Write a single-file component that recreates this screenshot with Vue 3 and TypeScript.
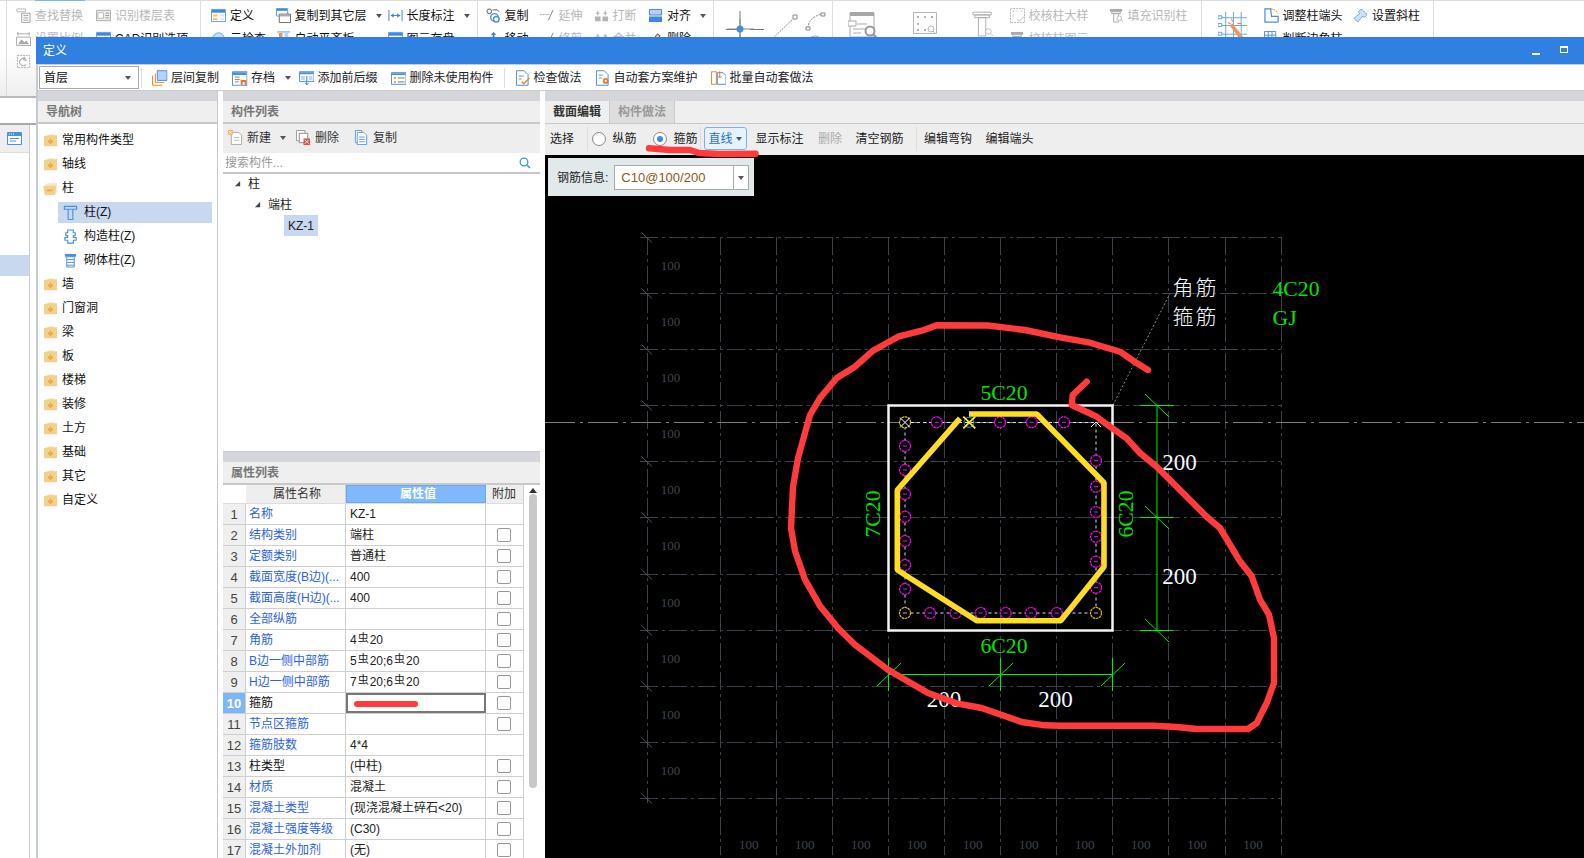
<script setup lang="ts">
interface RibbonItem { icon?: string; label?: string; caret?: boolean; off?: boolean; big?: string }
interface RibbonGroup { cls: string; items: RibbonItem[] }

const groups: RibbonGroup[] = [
  { cls: 'ga', items: [
    { icon: 'i-find', label: '查找替换', off: true },
    { icon: 'i-scale', label: '设置比例', off: true },
    { icon: 'i-rotate', off: true },
    { icon: 'i-floor', label: '识别楼层表', off: true },
    { icon: 'i-def', label: 'CAD识别选项' },
  ] },
  { cls: 'gb', items: [
    { icon: 'i-def', label: '定义' },
    { icon: 'i-check', label: '云检查' },
    { icon: 'i-copyfloor', label: '复制到其它层', caret: true },
    { icon: 'i-level', label: '自动平齐板' },
    { icon: 'i-len', label: '长度标注', caret: true },
    { icon: 'i-def', label: '图元存盘' },
  ] },
  { cls: 'gc', items: [
    { icon: 'i-copy2', label: '复制' },
    { icon: 'i-move', label: '移动' },
    { icon: 'i-extend', label: '延伸', off: true },
    { icon: 'i-extend', label: '修剪', off: true },
    { icon: 'i-break', label: '打断', off: true },
    { icon: 'i-break', label: '合并', off: true },
    { icon: 'i-align', label: '对齐', caret: true },
    { icon: 'i-erase', label: '删除' },
  ] },
  { cls: 'gd', items: [{ big: 'i-draw' }] },
  { cls: 'ge', items: [
    { big: 'i-form' },
    { big: 'i-dots' },
    { big: 'i-tcol' },
    { icon: 'i-verify', label: '校核柱大样', off: true },
    { icon: 'i-tsmall', label: '校核柱图元', off: true },
    { icon: 'i-tsmall', label: '填充识别柱', off: true },
  ] },
  { cls: 'gf', items: [
    { big: 'i-wand' },
    { icon: 'i-adjust', label: '调整柱端头' },
    { icon: 'i-table', label: '判断边角柱' },
    { icon: 'i-slant', label: '设置斜柱' },
  ] },
]

const tools = [
  { icon: 'i-layer', label: '层间复制' },
  { icon: 'i-save', label: '存档', caret: true },
  { icon: 'i-prefix', label: '添加前后缀' },
  { icon: 'i-unused', label: '删除未使用构件', sep: true },
  { icon: 'i-doccheck', label: '检查做法' },
  { icon: 'i-docgear', label: '自动套方案维护' },
  { icon: 'i-batch', label: '批量自动套做法' },
]

interface NavRow { label: string; icon: string; sub?: boolean; active?: boolean }
const nav: NavRow[] = [
  { label: '常用构件类型', icon: 'i-fold' },
  { label: '轴线', icon: 'i-fold' },
  { label: '柱', icon: 'i-open' },
  { label: '柱(Z)', icon: 'i-col', sub: true, active: true },
  { label: '构造柱(Z)', icon: 'i-gz', sub: true },
  { label: '砌体柱(Z)', icon: 'i-qt', sub: true },
  ...['墙', '门窗洞', '梁', '板', '楼梯', '装修', '土方', '基础', '其它', '自定义'].map((label) => ({ label, icon: 'i-fold' })),
]

interface Prop { name: string; parts: string[]; link: boolean; check: boolean }
const p = (name: string, value: string, link = true, check = true): Prop => ({ name, parts: value.split('|'), link, check })
const props: Prop[] = [
  p('名称', 'KZ-1', true, false),
  p('结构类别', '端柱'),
  p('定额类别', '普通柱'),
  p('截面宽度(B边)(...', '400'),
  p('截面高度(H边)(...', '400'),
  p('全部纵筋', ''),
  p('角筋', '4|20'),
  p('B边一侧中部筋', '5|20;6|20'),
  p('H边一侧中部筋', '7|20;6|20'),
  p('箍筋', '', false),
  p('节点区箍筋', ''),
  p('箍筋肢数', '4*4', true, false),
  p('柱类型', '(中柱)', false),
  p('材质', '混凝土'),
  p('混凝土类型', '(现浇混凝土碎石<20)'),
  p('混凝土强度等级', '(C30)'),
  p('混凝土外加剂', '(无)'),
]
const ACTIVE_ROW = 9

const vx = [647.5, 720.5, 776.5, 832.5, 888.5, 944.5, 1000.5, 1056.5, 1112.5, 1168.5, 1225.5, 1281.5]
const hy = [237.5, 293.5, 349.5, 405.5, 461.5, 517.5, 574.5, 630.5, 686.5, 742.5, 798.5]
const leftLabels = [265.7, 321.7, 377.7, 433.7, 489.7, 545.7, 602, 658, 714, 770]
const botLabels = [748.7, 804.7, 860.7, 916.7, 972.7, 1028.7, 1084.7, 1140.7, 1197, 1253]

const bars: [number, number][] = [
  [936.7, 422.3], [1000, 422.3], [1031.7, 422.3], [1064, 422.3],
  [905, 446], [905, 470], [905, 494], [905, 516.7], [905, 541], [905, 565], [905, 589],
  [1096, 460.7], [1096, 486.7], [1096, 512], [1096, 536.7], [1096, 561.7], [1096, 587.7],
  [930, 613], [955.7, 613], [980.7, 613], [1005.7, 613], [1031, 613], [1056.7, 613],
]

const hoop1 = '969,414 1036.7,414 1104,482.7 1104,566.7 1060.7,620.7 976.7,620.7 897.3,570 897.3,490 960,418.3'
const redLoop = '1148,370 1135,362 1120,351.7 1090,342.7 1060,337.3 1025,330 988,325.5 936.7,325.3 921.7,330.7 898,336.7 873,350.7 855,366.7 836.7,378 820,398 810,415 798,458 793,486.7 791,528 795,551 805,579.7 820,606 838,628 855,644.7 888,669.7 928,693 958,703.7 981.7,708 1021.7,722 1045,725.3 1060,725.7 1153,725.7 1176.7,727 1196.7,729 1248,729 1256.7,723 1266.7,703 1274,683 1274,638 1269,614.7 1260,599.7 1251.7,576.3 1240,561.3 1220,528 1206.7,516.7 1173,483 1156.7,466.7 1140,453 1126.7,438.3 1110,426.7 1096.7,416.7 1071.7,405 1072.7,395 1086.7,381.7'
const redTool = '649,148.3 670,150 690,150 699,153 720,154 755.5,153.7'
</script>

<template>
  <div class="app">
    <svg class="sprite" width="0" height="0" aria-hidden="true">
      <defs>
        <symbol id="i-find" viewBox="0 0 16 16"><path d="M1 1h9v3H1z" fill="none" stroke="#b5b5b5"/><path d="M6 5.500h9v10H6z" fill="#f4f4f4" stroke="#a8a8a8"/><path d="M8 8h5M8 10.500h5M8 13h5" stroke="#a8a8a8"/></symbol>
        <symbol id="i-floor" viewBox="0 0 16 16"><path d="M.5 2.500h15v11H.5z" fill="#eee" stroke="#aaa"/><path d="M2 5h6v6H2z" fill="#fff" stroke="#bbb"/><path d="M10 5.500h4M10 8h4M10 10.500h4" stroke="#999"/></symbol>
        <symbol id="i-scale" viewBox="0 0 16 16"><path d="M1 3h14M2 1v4M14 1v4" stroke="#aaa" fill="none"/><path d="M.5 6.500h15v9H.5z" fill="#fff" stroke="#aaa"/><path d="M2 14l4-5 3 3 2-2 3 4z" fill="#aaa"/></symbol>
        <symbol id="i-rotate" viewBox="0 0 16 16"><path d="M1.500 1.500h13v13h-13z" fill="none" stroke="#aaa" stroke-dasharray="2 1"/><path d="M11 6a4 4 0 1 0 0 5M9 3l-1 3 3 1" fill="none" stroke="#999"/></symbol>
        <symbol id="i-def" viewBox="0 0 16 16"><path d="M.5 1.500h15v13H.5z" fill="#fff" stroke="#5a9be0"/><path d="M1 2h14v3H1z" fill="#3f87df"/><path d="M2 7h5v2H2zM2 11h5v2H2z" fill="#f3c26a"/><path d="M9 7h5v2H9zM9 11h5v2H9z" fill="#dbe6f5"/></symbol>
        <symbol id="i-check" viewBox="0 0 16 16"><circle cx="8" cy="8" r="6" fill="#cfe0f6" stroke="#5a9be0"/></symbol>
        <symbol id="i-copyfloor" viewBox="0 0 16 16"><path d="M.5.500h12v8H.5z" fill="#fff" stroke="#5a9be0"/><path d="M1 1h11v2H1z" fill="#3f87df"/><path d="M3.500 6.500h12v9h-12z" fill="#fff" stroke="#666"/><path d="M4 7h11v2H4z" fill="#aaa"/></symbol>
        <symbol id="i-level" viewBox="0 0 16 16"><path d="M1 1h14" stroke="#5a9be0"/><path d="M3 2h4v8H3z" fill="#e9955a"/><path d="M9 2h4v6H9z" fill="#b9d3f2"/></symbol>
        <symbol id="i-len" viewBox="0 0 16 16"><path d="M1 2v12M15 2v12M3 8h10" stroke="#3f7fc8" fill="none"/><path d="M3 8l3-2.500v5zM13 8l-3-2.500v5z" fill="#3f7fc8"/></symbol>
        <symbol id="i-copy2" viewBox="0 0 16 16"><circle cx="3.500" cy="3.500" r="2.500" fill="#fff" stroke="#555"/><circle cx="9" cy="10" r="4" fill="#fff" stroke="#4a8fdc" stroke-width="1.500"/><circle cx="11" cy="12" r="3" fill="#fff" stroke="#4a8fdc" stroke-width="1.500"/><path d="M7 2h5l2 2" stroke="#555" fill="none"/></symbol>
        <symbol id="i-move" viewBox="0 0 16 16"><path d="M8 1l3 3H9v6H7V4H5zM2 12h12v2H2z" fill="#3f7fc8"/></symbol>
        <symbol id="i-extend" viewBox="0 0 16 16"><path d="M0 7h7" stroke="#aaa" stroke-dasharray="2 1"/><path d="M9 13l5-11" stroke="#888"/><path d="M7 7h3" stroke="#bbb"/></symbol>
        <symbol id="i-break" viewBox="0 0 16 16"><path d="M1 9h6v5H1zM9 9h6v5H9z" fill="#b5b5b5"/><path d="M4 3v5M2 5.500h4M12 3v5M10 5.500h4" stroke="#aaa"/></symbol>
        <symbol id="i-align" viewBox="0 0 16 16"><path d="M1.500 1.500h13v6h-13z" fill="#b5d0f0" stroke="#3f7fc8"/><path d="M1 9h14v6H1z" fill="#3f87df"/></symbol>
        <symbol id="i-erase" viewBox="0 0 16 16"><path d="M3 13l7-10 3 2-7 10z" fill="#e6c27a" stroke="#555"/></symbol>
        <symbol id="i-draw" viewBox="0 0 118 40">
          <path d="M26 4v34M12 22.500h14M36 22.500h14" stroke="#777"/><path d="M26 12v20M13 22h27" stroke="#888" fill="none"/><circle cx="26" cy="22" r="3.500" fill="#4a8ae0"/>
          <path d="M57 33l24-23" stroke="#888" stroke-dasharray="2 1" fill="none"/><path d="M53 33h4v4h-4zM79 8h4v4h-4z" fill="#fff" stroke="#888"/>
          <path d="M94 21c0-7 5-12 14-14" stroke="#888" stroke-dasharray="2 1" fill="none"/><path d="M92 20h4v3h-4zM107 6h4v3h-4z" fill="#fff" stroke="#888"/>
          <circle cx="101" cy="37" r="8" fill="none" stroke="#aaa"/><path d="M97 42l7-9" stroke="#aaa"/>
        </symbol>
        <symbol id="i-form" viewBox="0 0 30 30"><path d="M2 1h24v24H2z" fill="#fff" stroke="#aaa"/><path d="M2 0h24v4H2z" fill="#a6a6a6"/><path d="M0 9h8v5H0z" fill="#fff" stroke="#aaa"/><path d="M9 12h10M5 17h12M5 21h8" stroke="#aaa"/><circle cx="22" cy="19" r="4.500" fill="#fff" stroke="#999" stroke-width="2"/><path d="M25 22l4 4" stroke="#999" stroke-width="2"/></symbol>
        <symbol id="i-dots" viewBox="0 0 24 24"><path d="M.5.500h23v21H.5z" fill="none" stroke="#b5b5b5"/><path d="M4 4h2v2H4zM11 4h2v2h-2zM18 4h2v2h-2zM4 11h2v2H4zM4 17h2v2H4zM11 17h2v2h-2z" fill="#b5b5b5"/><circle cx="18" cy="17" r="3" fill="#fff" stroke="#bbb"/><path d="M20 19l3 3" stroke="#bbb"/></symbol>
        <symbol id="i-tcol" viewBox="0 0 24 30"><path d="M1 1h20v3H1zM3 4h16v3H3zM7 7h8v20H7z" fill="#fff" stroke="#aaa"/><circle cx="18" cy="22" r="3" fill="#fff" stroke="#bbb"/><path d="M20 24l3 3" stroke="#bbb"/></symbol>
        <symbol id="i-verify" viewBox="0 0 16 16"><path d="M.5.500h15v15H.5z" fill="none" stroke="#b5b5b5" stroke-dasharray="2 1"/><path d="M3 3h1v1H3zM7 3h1v1H7zM12 3h1v1h-1zM3 8h1v1H3z" fill="#aaa"/><path d="M8 12l2 2 5-5" stroke="#bbb" fill="none"/></symbol>
        <symbol id="i-tsmall" viewBox="0 0 16 16"><path d="M1 1h13v3H1z" fill="#aaa"/><path d="M3 4h9v2H3zM5 6h5v9H5z" fill="#fff" stroke="#aaa"/><circle cx="11" cy="11" r="2.500" fill="#fff" stroke="#bbb"/><path d="M13 13l2 2" stroke="#bbb"/></symbol>
        <symbol id="i-wand" viewBox="0 0 30 30"><path d="M8 1v30M16 1v30M24 1v30M2 7h28M2 15h28M2 24h28" stroke="#6aa3e4" fill="none"/><path d="M0 5h4v3H0zM0 13h4v3H0zM0 22h4v3H0z" fill="#fff" stroke="#5a9be0"/><path d="M12 15l3-2 12 15-3 3z" fill="#e79a5c"/><path d="M10 12l3 1M14 8l1 3M20 13h4" stroke="#e8762a"/></symbol>
        <symbol id="i-adjust" viewBox="0 0 16 16"><path d="M1 1h6l1 8h7v6H1z" fill="#fff" stroke="#4a8fdc" stroke-width="1.300"/><path d="M7 1c4 0 6 2 8 5" stroke="#e8762a" fill="none" stroke-dasharray="2 1"/></symbol>
        <symbol id="i-table" viewBox="0 0 16 16"><path d="M.5.500h12v12H.5zM.5 4.500h12M.5 8.500h12M4.500.5v12M8.500.5v12" fill="#fff" stroke="#4a8fdc"/></symbol>
        <symbol id="i-slant" viewBox="0 0 16 16"><path d="M1 11l4 4 5-6 2 1 3-3-6-6-3 3 1 2z" fill="#cfe0f6" stroke="#4a8fdc" stroke-dasharray="2 .6"/></symbol>
        <symbol id="i-layer" viewBox="0 0 16 16"><path d="M.5 5.500v10h10M3.500 3.500v9h9" fill="none" stroke="#e8862a"/><path d="M5.500.5h10v10h-10z" fill="#b7d3f4" stroke="#4a8fdc"/></symbol>
        <symbol id="i-save" viewBox="0 0 16 16"><path d="M.5 1.500h15v14H.5z" fill="#fff" stroke="#4a8fdc"/><path d="M1 2h14v3H1z" fill="#4a8fdc"/><path d="M3 7h5M3 9.500h5M3 12h4" stroke="#888"/><path d="M9 10h6v5H9z" fill="#e8762a"/><path d="M11 12h2v3h-2z" fill="#fff"/></symbol>
        <symbol id="i-prefix" viewBox="0 0 16 16"><path d="M.5 1.500h15v10H.5z" fill="#fff" stroke="#4a8fdc"/><path d="M1 2h14v2H1z" fill="#4a8fdc"/><path d="M2 6h4v4H2zM10 6h4v4h-4z" fill="#bfd6f3"/><path d="M8 6v9M6 13l2 2 2-2" stroke="#3f7fc8" fill="none"/></symbol>
        <symbol id="i-unused" viewBox="0 0 16 16"><path d="M.5 2.500h15v12H.5z" fill="#fff" stroke="#4a8fdc"/><path d="M1 3h14v2H1z" fill="#4a8fdc"/><path d="M3 7h2v2H3zM3 11h2v2H3z" fill="#e8962a"/><path d="M7 8h7M7 12h7" stroke="#777"/></symbol>
        <symbol id="i-doccheck" viewBox="0 0 16 16"><path d="M1.500.5h8l4 4v11h-12z" fill="#fff" stroke="#4a8fdc"/><path d="M4 6h5M4 9h3" stroke="#888"/><path d="M7 12l2 2 6-6" stroke="#e8862a" fill="none" stroke-width="1.500"/></symbol>
        <symbol id="i-docgear" viewBox="0 0 16 16"><path d="M1.500.5h8l4 4v11h-12z" fill="#fff" stroke="#4a8fdc"/><path d="M4 5h4M4 8h3" stroke="#888"/><circle cx="11" cy="11" r="3" fill="#e8762a"/><circle cx="11" cy="11" r="1.200" fill="#fff"/></symbol>
        <symbol id="i-batch" viewBox="0 0 16 16"><path d="M.5 1.500h5v13h-5z" fill="#fff" stroke="#e8862a"/><path d="M6.500 2.500h6l3 3v9h-9z" fill="#fff" stroke="#4a8fdc"/><path d="M9 1v7M7 6l2 2 2-2" stroke="#e8762a" fill="none"/></symbol>
        <symbol id="i-new" viewBox="0 0 16 16"><path d="M3.500 2.500h8l3 3v10h-11z" fill="#fff" stroke="#aaa"/><path d="M0 0h5v5H0z" fill="#f1b04f"/><path d="M1 1l3 3M4 1L1 4" stroke="#fff"/><path d="M6 8h6M6 11h6" stroke="#bbb"/></symbol>
        <symbol id="i-del" viewBox="0 0 16 16"><path d="M.5.5h9v11h-9z" fill="#fff" stroke="#999"/><path d="M3.500 3.500h9v10h-9z" fill="#fff" stroke="#888"/><path d="M8 9h7v7H8z" fill="#d9534f"/><path d="M9.500 10.500l4 4M13.500 10.500l-4 4" stroke="#fff"/></symbol>
        <symbol id="i-doc" viewBox="0 0 16 16"><path d="M1.500.5h7v13h-7z" fill="#fff" stroke="#5a9be0"/><path d="M3.500 2.500h7l3 3v10h-10z" fill="#fff" stroke="#5a9be0"/><path d="M5.500 7.500h6M5.500 10h6M5.500 12.500h6" stroke="#5a9be0"/></symbol>
        <symbol id="i-search" viewBox="0 0 12 12"><circle cx="5" cy="5" r="3.800" fill="none" stroke="#3d96d6" stroke-width="1.300"/><path d="M8 8l3 3" stroke="#3d96d6" stroke-width="1.500"/></symbol>
        <symbol id="i-fold" viewBox="0 0 16 16"><path d="M6 1.500h6v2H6z" fill="#f5e3bd"/><path d="M1 3.500l4-1h10v11.500H1z" fill="#f2d08e"/><path d="M7 6h2v2h2v2H9v2H7v-2H5V8h2z" fill="#e9ab4e"/></symbol>
        <symbol id="i-open" viewBox="0 0 16 16"><path d="M3 3l5-1h7v11H3z" fill="#f8e8c6"/><path d="M0 5h14l-1 10H2z" fill="#f2d08e"/><path d="M4 9h6v2H4z" fill="#e9ab4e"/></symbol>
        <symbol id="i-col" viewBox="0 0 16 16"><path d="M1.500 1.500h13v3h-13zM3.500 4.500h9M5.500 4.500h5v11h-5z" fill="none" stroke="#4a8fdc" stroke-width="1.200"/></symbol>
        <symbol id="i-gz" viewBox="0 0 16 16"><path d="M5 1h6v3h2v3h-2v2h3v3h-3v3H5v-3H2V9h3V7H3V4h2z" fill="#fff" stroke="#4a8fdc" stroke-width="1.200"/></symbol>
        <symbol id="i-qt" viewBox="0 0 16 16"><path d="M2 1h12v3H2z" fill="#4a8fdc"/><path d="M4 4h8v11H4z" fill="#fff" stroke="#4a8fdc"/><path d="M4 7h8M4 10h8M4 13h8" stroke="#4a8fdc"/></symbol>
        <symbol id="i-tri" viewBox="0 0 8 8"><path d="M7 1v6H1z" fill="#444"/></symbol>
        <symbol id="i-side" viewBox="0 0 15 13"><path d="M.5.5h14v12H.5z" fill="#fff" stroke="#4a8fdc"/><path d="M1 1h13v3H1z" fill="#4a8fdc"/><path d="M2 1.500h1v1H2zM4 1.500h1v1H4zM6 1.500h1v1H6z" fill="#fff"/><path d="M3 6.500h9M3 9h6" stroke="#4a8fdc"/></symbol>
      </defs>
    </svg>

    <header class="ribbon">
      <section v-for="g in groups" :key="g.cls" class="group" :class="g.cls">
        <template v-for="(it, i) in g.items" :key="i">
          <svg v-if="it.big" class="big" :class="it.big"><use :href="'#' + it.big" /></svg>
          <div v-else class="rb-item" :class="{ off: it.off }">
            <svg class="ic"><use :href="'#' + it.icon" /></svg>
            <span v-if="it.label">{{ it.label }}</span>
            <i v-if="it.caret" class="caret" />
          </div>
        </template>
      </section>
    </header>

    <aside class="side">
      <div class="side-gap" />
      <div class="side-tool"><svg class="side-ic"><use href="#i-side" /></svg></div>
      <div class="side-list"><div class="side-sel" /></div>
    </aside>

    <main class="window">
      <div class="titlebar">
        <span>定义</span>
        <div class="win-btns"><i class="w-min" /><i class="w-max" /></div>
      </div>

      <div class="wtool">
        <div class="combo"><span>首层</span><i class="caret" /></div>
        <i class="vsep first" />
        <template v-for="t in tools" :key="t.label">
          <div class="tbtn">
            <svg class="ic16"><use :href="'#' + t.icon" /></svg>
            <span>{{ t.label }}</span>
            <i v-if="t.caret" class="caret" />
          </div>
          <i v-if="t.sep" class="vsep mid" />
        </template>
      </div>

      <div class="body">
        <section class="col nav">
          <div class="strip" />
          <h3 class="head">导航树</h3>
          <ul class="navlist">
            <li v-for="n in nav" :key="n.label" class="navrow" :class="{ sub: n.sub, active: n.active }">
              <svg class="ic"><use :href="'#' + n.icon" /></svg>
              <span>{{ n.label }}</span>
            </li>
          </ul>
        </section>

        <section class="col mid">
          <div class="comp">
            <div class="strip" />
            <h3 class="head">构件列表</h3>
            <div class="ctool">
              <div class="cbtn"><svg class="ic"><use href="#i-new" /></svg><span>新建</span><i class="caret" /></div>
              <div class="cbtn"><svg class="ic"><use href="#i-del" /></svg><span>删除</span></div>
              <div class="cbtn"><svg class="ic"><use href="#i-doc" /></svg><span>复制</span></div>
            </div>
            <div class="search"><span>搜索构件...</span><svg class="mag"><use href="#i-search" /></svg></div>
            <div class="tree">
              <div class="tnode l0"><svg class="tri"><use href="#i-tri" /></svg><span>柱</span></div>
              <div class="tnode l1"><svg class="tri"><use href="#i-tri" /></svg><span>端柱</span></div>
              <div class="tnode l2"><span class="picked">KZ-1</span></div>
            </div>
          </div>
          <div class="prop">
            <div class="strip" />
            <h3 class="head">属性列表</h3>
            <div class="prop-body">
              <div class="ptable">
                <div class="prow phead">
                  <div class="c-n blank" /><div class="c-name">属性名称</div><div class="c-val sel">属性值</div><div class="c-add">附加</div>
                </div>
                <div v-for="(r, i) in props" :key="r.name" class="prow">
                  <div class="c-n" :class="{ cur: i === ACTIVE_ROW }">{{ i + 1 }}</div>
                  <div class="c-name" :class="{ link: r.link }">{{ r.name }}</div>
                  <div class="c-val" :class="{ edit: i === ACTIVE_ROW }">
                    <template v-for="(part, k) in r.parts" :key="k"><b v-if="k > 0" class="bar">虫</b>{{ part }}</template>
                  </div>
                  <div class="c-add"><i v-if="r.check" class="cb" /></div>
                </div>
              </div>
              <div class="scroll"><i class="up" /><i class="thumb" /></div>
            </div>
          </div>
        </section>

        <section class="col right">
          <div class="strip" />
          <div class="tabs">
            <div class="tab on">截面编辑</div>
            <div class="tab">构件做法</div>
          </div>
          <div class="stool">
            <span>选择</span>
            <i class="vsep s1" />
            <label class="radio r1"><i class="dot" /><span>纵筋</span></label>
            <label class="radio r2"><i class="dot on" /><span>箍筋</span></label>
            <i class="vsep s2" />
            <div class="ddbtn"><span>直线</span><i class="caret" /></div>
            <span class="m9">显示标注</span>
            <span class="m14 off">删除</span>
            <span class="m13">清空钢筋</span>
            <i class="vsep s3" />
            <span class="m7">编辑弯钩</span>
            <span class="m13">编辑端头</span>
          </div>
          <div class="canvas">
            <svg class="cad" viewBox="545 155 1039 703" width="1039" height="703">
              <g class="grid">
                <line v-for="y in hy" :key="'h' + y" x1="640" :y1="y" x2="1281" :y2="y" />
                <line x1="647.500" y1="237" x2="647.500" y2="803" />
                <line v-for="x in vx.slice(1)" :key="'v' + x" :x1="x" y1="237" :x2="x" y2="855" />
              </g>
              <g class="slash">
                <line v-for="y in hy" :key="'s' + y" x1="641.500" :y1="y - 5" x2="652" :y2="y + 5" />
              </g>
              <g class="lab100">
                <text v-for="y in leftLabels" :key="'l' + y" x="670.500" :y="y + 4.500">100</text>
                <text v-for="x in botLabels" :key="'b' + x" :x="x" y="848.500">100</text>
              </g>
              <line class="center" x1="545" y1="422.500" x2="1584" y2="422.500" />
              <line class="leader" x1="1113" y1="405" x2="1170" y2="293.500" />

              <path class="tie" d="M905 422.500H1096V613H905Z" />
              <rect class="outer" x="888.500" y="405.500" width="224" height="225" />

              <g v-for="[x, y] in bars" :key="x + '-' + y">
                <circle class="bar-c" :cx="x" :cy="y" r="5.500" />
                <line class="bar-m" :x1="x - 2" :y1="y" :x2="x + 2" :y2="y" />
              </g>
              <circle class="bar-y" cx="905" cy="613" r="5.500" />
              <circle class="bar-y" cx="1096" cy="613" r="5.500" />
              <line class="bar-g" x1="903" y1="613" x2="907" y2="613" />
              <line class="bar-g" x1="1094" y1="613" x2="1098" y2="613" />
              <circle class="bar-y" cx="905" cy="422.300" r="5.500" />
              <path class="x-w" d="M900 417.500l10 10M910 417.500l-10 10M1091 427l5-5 5 5" />

              <polyline class="hoop" :points="hoop1" />
              <circle class="x-b" cx="969" cy="422.300" r="5" />
              <path class="x-y" d="M963.300 416.700l12 11.600M975.300 416.700l-12 11.600" />

              <g class="dim">
                <line x1="1157" y1="405.500" x2="1157" y2="630.500" />
                <line x1="1140" y1="405.500" x2="1173.500" y2="405.500" />
                <line x1="1140" y1="517.500" x2="1173.500" y2="517.500" />
                <line x1="1140" y1="630.500" x2="1173.500" y2="630.500" />
                <line x1="888.500" y1="674.500" x2="1112.500" y2="674.500" />
                <line x1="888.500" y1="658" x2="888.500" y2="691" />
                <line x1="1000.500" y1="658" x2="1000.500" y2="691" />
                <line x1="1112.500" y1="658" x2="1112.500" y2="691" />
                <line x1="1145" y1="394" x2="1169" y2="417" />
                <line x1="1145" y1="506" x2="1169" y2="529" />
                <line x1="1145" y1="619" x2="1169" y2="642" />
                <line x1="877" y1="686" x2="901" y2="663" />
                <line x1="989" y1="686" x2="1013" y2="663" />
                <line x1="1101" y1="686" x2="1125" y2="663" />
              </g>

              <text class="t-g" x="1004" y="400">5C20</text>
              <text class="t-g" x="1004" y="653">6C20</text>
              <text class="t-g" transform="translate(880 514) rotate(-90)">7C20</text>
              <text class="t-g" transform="translate(1133 514) rotate(-90)">6C20</text>
              <text class="t-w" x="1179.500" y="470">200</text>
              <text class="t-w" x="1179.500" y="583.500">200</text>
              <text class="t-w" x="944" y="707">200</text>
              <text class="t-w" x="1055.500" y="707">200</text>
              <text class="t-cn" x="1172.500" y="295">角筋</text>
              <text class="t-cn" x="1172.500" y="324">箍筋</text>
              <text class="t-gl" x="1272.500" y="295.500">4C20</text>
              <text class="t-gl" x="1272.500" y="324.500">GJ</text>
            </svg>
            <div class="info">
              <span>钢筋信息:</span>
              <div class="info-combo"><span>C10@100/200</span><i class="info-arrow"><i class="caret" /></i></div>
            </div>
          </div>
        </section>
      </div>
    </main>

    <svg class="ink" viewBox="0 0 1584 858" width="1584" height="858" aria-hidden="true">
      <polyline :points="redLoop" />
      <polyline :points="redTool" />
      <line class="thick" x1="357" y1="704" x2="415" y2="704" />
    </svg>
  </div>
</template>

<style>
html, body { margin: 0; padding: 0; background: #fff; overflow: hidden; }
</style>

<style scoped>
.app {
  position: relative;
  width: 1584px;
  height: 858px;
  overflow: hidden;
  background: #fff;
  color: #222;
  font: 12px/16px "Liberation Sans", "Noto Sans CJK SC", sans-serif;
}
.sprite { position: absolute; }
.caret {
  display: inline-block;
  width: 0;
  height: 0;
  border: 3px solid transparent;
  border-top: 4px solid #555;
  border-bottom: 0;
}

/* ribbon */
.ribbon {
  position: relative;
  display: flex;
  padding-left: 6px;
  border-top: 1px solid #ddd;
  border-bottom: 2px solid #bbb;
  box-sizing: content-box;
  height: 95px;
  background: linear-gradient(#fff 55%, #eee);
}
.ribbon::before {
  content: "";
  position: absolute;
  left: 35px;
  top: -1px;
  width: 50px;
  height: 1px;
  background: #7db3ee;
}
.group {
  display: grid;
  grid-auto-flow: column;
  grid-template-rows: repeat(2, 23px);
  align-content: start;
  padding-top: 3px;
  border-right: 1px solid #ddd;
  height: 92px;
}
.ga { border-left: 1px solid #ddd; padding-left: 9px; grid-template-rows: repeat(3, 23px); grid-template-columns: 80px 104px; }
.gb { padding-left: 10px; grid-template-columns: 64.5px 112px 89.5px; }
.gc { padding-left: 7.5px; grid-template-columns: 54px 54px 54.5px 64.5px; }
.gd { width: 118px; }
.ge { padding-left: 15px; grid-template-columns: 65px 59px 38px 99px 92px; }
.gf { padding-left: 16px; grid-template-columns: 46px 89.5px 79.5px; }
.rb-item {
  display: flex;
  align-items: center;
  gap: 4px;
  white-space: nowrap;
  color: #111;
}
.rb-item.off { color: #b8b8b8; }
.rb-item .caret { margin-left: 5px; }
.ic { width: 15px; height: 15px; flex: none; }
.big { grid-row: span 2; overflow: visible; }
.i-draw { width: 118px; height: 40px; margin-top: 3px; }
.i-form { width: 30px; height: 30px; margin-top: 8px; }
.i-dots { width: 24px; height: 24px; margin-top: 8px; }
.i-tcol { width: 22px; height: 28px; margin-top: 7px; }
.i-wand { width: 29px; height: 29px; margin-top: 7px; }

/* left sliver */
.side { width: 36px; display: flex; flex-direction: column; height: 760px; }
.side-gap { height: 25px; border-bottom: 2px solid #aaa; box-sizing: content-box; }
.side-tool {
  width: 30px;
  height: 28px;
  padding: 7px 0 0 7px;
  box-sizing: border-box;
  background: #eee;
  border-right: 1px solid #ccc;
  border-bottom: 1px solid #ddd;
}
.side-ic { display: block; width: 15px; height: 13px; }
.side-list {
  flex: 1;
  width: 30px;
  box-sizing: border-box;
  padding-top: 102px;
  border-right: 1px solid #ccc;
}
.side-sel { height: 21px; background: #c8d8ef; }

/* window */
.window {
  position: absolute;
  left: 36px;
  top: 37px;
  right: 0;
  bottom: 0;
  display: flex;
  flex-direction: column;
  background: #fff;
  border-left: 2px solid #c5cbd3;
}
.titlebar {
  display: flex;
  align-items: center;
  justify-content: space-between;
  flex: none;
  height: 27px;
  padding: 0 16px 0 7px;
  background: #2f80e0;
  color: #fff;
  margin-left: -2px;
}
.win-btns { display: flex; align-items: flex-start; gap: 20px; }
.w-min { width: 8px; height: 2px; background: #fff; margin-top: 6px; }
.w-max { width: 8px; height: 7px; border: 1px solid #fff; border-top-width: 2px; box-sizing: border-box; margin-top: -1px; }
.wtool {
  display: flex;
  align-items: center;
  flex: none;
  padding-left: 1px;
  border-top: 1px solid #ccc;
  border-bottom: 1px solid #ccc;
  box-sizing: content-box;
  height: 25px;
}
.combo {
  display: flex;
  align-items: center;
  justify-content: space-between;
  width: 100px;
  height: 23px;
  box-sizing: border-box;
  padding: 0 7px 0 4px;
  border: 1px solid #aaa;
  font-size: 12px;
  color: #111;
}
.vsep { display: block; width: 1px; height: 20px; background: #ddd; flex: none; }
.vsep.first { margin: 0 10px 0 2px; }
.vsep.mid { margin: 0 10px 0 -3px; }
.tbtn { display: flex; align-items: center; gap: 3.5px; margin-right: 13px; white-space: nowrap; color: #222; }
.tbtn .caret { margin-left: 6px; margin-right: -5px; }
.ic16 { width: 15.500px; height: 16px; flex: none; }

.body {
  flex: 1;
  min-height: 0;
  display: grid;
  grid-template-columns: 180px 317px 1fr;
  column-gap: 5px;
}
.col { min-width: 0; min-height: 0; display: flex; flex-direction: column; }
.strip { height: 10px; background: #d5d6db; flex: none; }
.head {
  margin: 0;
  height: 23px;
  flex: none;
  box-sizing: border-box;
  padding-left: 8px;
  line-height: 22px;
  font-size: 12px;
  font-weight: 700;
  color: #777;
  background: #efefef;
  border-bottom: 2px solid #c8c8c8;
}

/* nav */
.nav { border-right: 1px solid #c5cbd3; }
.navlist { list-style: none; margin: 4px 0 0; padding: 0 5px 0 5px; }
.navrow { display: flex; align-items: center; gap: 4px; height: 24px; color: #111; }
.navrow.sub { margin-left: 15px; padding-left: 5px; height: 24px; gap: 6px; }
.navrow.active { background: linear-gradient(#c8d8ef, #c8d8ef) 0 50% / 100% 21px no-repeat; }

/* component list */
.mid { overflow: hidden; }
.comp { height: 361px; flex: none; display: flex; flex-direction: column; border-bottom: 1px solid #ccc; box-sizing: border-box; }
.ctool { display: flex; align-items: center; height: 29px; flex: none; background: #eee; padding: 0 0 2px 5px; box-sizing: border-box; }
.cbtn { display: flex; align-items: center; gap: 4px; margin-right: 15px; color: #333; }
.cbtn:first-child { margin-right: 10px; }
.cbtn .caret { margin-left: 5px; }
.search {
  display: flex;
  align-items: center;
  justify-content: space-between;
  height: 19px;
  flex: none;
  box-sizing: content-box;
  padding: 0 9px 0 2px;
  border-bottom: 2px solid #c8c8c8;
  color: #999;
}
.mag { width: 12px; height: 12px; }
.tree { margin-top: -1px; }
.tnode { display: flex; align-items: center; height: 21px; color: #222; }
.tri { width: 7px; height: 7px; margin-right: 7px; }
.l0 { padding-left: 11px; }
.l1 { padding-left: 31px; }
.l2 { padding-left: 61px; }
.picked { display: flex; align-items: center; height: 21px; padding: 0 4px; background: #c8d8ef; }

/* properties */
.prop { flex: 1; min-height: 0; display: flex; flex-direction: column; }
.prop-body { display: flex; flex: 1; min-height: 0; overflow: hidden; }
.ptable { width: 301px; flex: none; }
.prow {
  display: grid;
  grid-template-columns: 23px 100px 140px 38px;
  height: 21px;
  box-sizing: border-box;
  border-bottom: 1px solid #cfcfcf;
  line-height: 21px;
}
.prow > div { box-sizing: border-box; border-right: 1px solid #cfcfcf; overflow: hidden; white-space: nowrap; }
.phead { height: 19px; line-height: 19px; border-bottom: 1px solid #ddd; }
.phead > div { background: #eee; text-align: center; color: #333; }
.phead .blank { background: #fff; border-right: 0; }
.phead .sel { background: #7fb9fb; color: #fff; font-weight: 700; border: 1px solid #6fa8ea; line-height: 16px; }
.c-n { background: #efefef; text-align: center; color: #444; font-size: 13px; }
.c-n.cur { background: #7cb8f8; color: #fff; font-weight: 700; }
.c-name { padding-left: 3px; color: #111; }
.c-name.link { color: #2b62e6; }
.c-val { padding-left: 4px; color: #222; }
.c-val.edit { border: 2px solid #777 !important; }
.c-add { display: flex; align-items: center; justify-content: center; padding-right: 1px; }
.cb { display: block; width: 14px; height: 14px; box-sizing: border-box; border: 1px solid #999; border-radius: 2px; background: #fff; }
.bar { font-size: 11px; font-weight: 400; vertical-align: 2px; line-height: 0; margin: 0 1px; }
.scroll { flex: 1; position: relative; }
.up {
  position: absolute;
  left: 5px;
  top: 3px;
  width: 0;
  height: 0;
  border: 4px solid transparent;
  border-bottom: 5px solid #333;
  border-top: 0;
}
.thumb {
  position: absolute;
  left: 5px;
  top: 9px;
  width: 8px;
  height: 294px;
  border-radius: 4px;
  background: #c8c8c8;
}

/* section editor */
.tabs {
  display: flex;
  height: 23px;
  flex: none;
  background: #efefef;
  border-bottom: 1px solid #c8c8c8;
  box-sizing: border-box;
}
.tab {
  width: 65px;
  line-height: 22px;
  text-align: center;
  font-weight: 700;
  color: #999;
  background: #dedede;
  border-right: 1px solid #ccc;
  box-sizing: border-box;
}
.tab.on { color: #333; background: #efefef; }
.stool {
  display: flex;
  align-items: center;
  height: 31px;
  flex: none;
  padding: 0 0 2px 5px;
  box-sizing: border-box;
  background: #eee;
  color: #222;
  white-space: nowrap;
}
.vsep.s1 { height: 24px; margin-left: 12.500px; }
.vsep.s2 { height: 24px; margin-left: 2.500px; }
.vsep.s3 { height: 24px; margin-left: 12.500px; }
.radio { display: flex; align-items: center; gap: 7px; }
.r1 { margin-left: 4px; }
.r2 { margin-left: 16px; }
.dot {
  position: relative;
  display: block;
  width: 14px;
  height: 14px;
  box-sizing: border-box;
  border: 1px solid #888;
  border-radius: 50%;
  background: #fff;
}
.dot.on::after {
  content: "";
  position: absolute;
  left: 3px;
  top: 3px;
  width: 6px;
  height: 6px;
  border-radius: 50%;
  background: #3b8ae8;
}
.ddbtn {
  display: flex;
  align-items: center;
  justify-content: space-between;
  width: 43px;
  height: 23px;
  box-sizing: border-box;
  margin-left: 2.500px;
  padding: 0 4px;
  border: 1px solid #7ab0f0;
  border-radius: 3px;
  background: #e8f2fd;
  color: #2a6fd0;
}
.m9 { margin-left: 9px; }
.m14 { margin-left: 14.500px; }
.m13 { margin-left: 13.500px; }
.m7 { margin-left: 7px; }
.off { color: #aaa; }
.canvas { position: relative; flex: 1; min-height: 0; background: #000; overflow: hidden; }
.cad { display: block; }
.grid line { stroke: #3a404c; stroke-width: 1; stroke-dasharray: 18 4 3 4; }
.slash line { stroke: #555; stroke-width: 1; }
.lab100 text { fill: #3f4552; font: 13px "Liberation Serif", serif; text-anchor: middle; }
.center { stroke: #7c7c7c; stroke-width: 1; stroke-dasharray: 30 5 3 5; }
.leader { stroke: #888; stroke-width: 1; stroke-dasharray: 2 2; }
.tie { fill: none; stroke: #cfe6ff; stroke-width: 1; stroke-dasharray: 3 3; }
.outer { fill: none; stroke: #f4f4f4; stroke-width: 2.500; }
.bar-c { fill: #000; stroke: #ff00ff; stroke-width: 1.200; stroke-dasharray: 2.500 .6; }
.bar-m { stroke: #d020ff; stroke-width: 1; }
.bar-y { fill: #000; stroke: #e8c020; stroke-width: 1.200; stroke-dasharray: 2.500 .6; }
.bar-g { stroke: #aaa; stroke-width: 1; }
.x-w { fill: none; stroke: #fff; stroke-width: 1; }
.hoop { fill: none; stroke: #ffdd22; stroke-width: 5.600; stroke-linejoin: bevel; }
.x-b { fill: none; stroke: #2a90ff; stroke-width: 1; }
.x-y { fill: none; stroke: #ffee22; stroke-width: 1.800; }
.dim line { stroke: #00f000; stroke-width: 1; }
.t-g { fill: #00e600; font: 21.700px "Liberation Serif", serif; text-anchor: middle; }
.t-w { fill: #f4f8ff; font: 23px "Liberation Serif", serif; text-anchor: middle; }
.t-cn { fill: #f4f8ff; font: 300 21px "Noto Sans CJK SC", sans-serif; letter-spacing: 2px; }
.t-gl { fill: #00e600; font: 21.700px "Liberation Serif", serif; }
.info {
  position: absolute;
  left: 3px;
  top: 3px;
  width: 206px;
  height: 38px;
  display: flex;
  align-items: center;
  padding: 1px 0 0 9px;
  gap: 6px;
  box-sizing: border-box;
  background: #e2e9ea;
  color: #222;
  white-space: nowrap;
}
.info-combo {
  display: flex;
  align-items: center;
  justify-content: space-between;
  width: 135px;
  height: 25px;
  box-sizing: border-box;
  padding-left: 6px;
  border: 1px solid #aaa;
  background: #fff;
  font-size: 13px;
  color: #8a5a20;
}
.info-arrow {
  display: flex;
  align-items: center;
  justify-content: center;
  width: 14px;
  height: 100%;
  border-left: 1px solid #aaa;
}

/* hand-drawn red annotations */
.ink { position: absolute; left: 0; top: 0; pointer-events: none; }
.ink polyline { fill: none; stroke: #ff3b3b; stroke-width: 6.400; stroke-linecap: round; stroke-linejoin: round; }
.ink .thick { stroke: #ff3b3b; stroke-width: 6; stroke-linecap: round; }
</style>
